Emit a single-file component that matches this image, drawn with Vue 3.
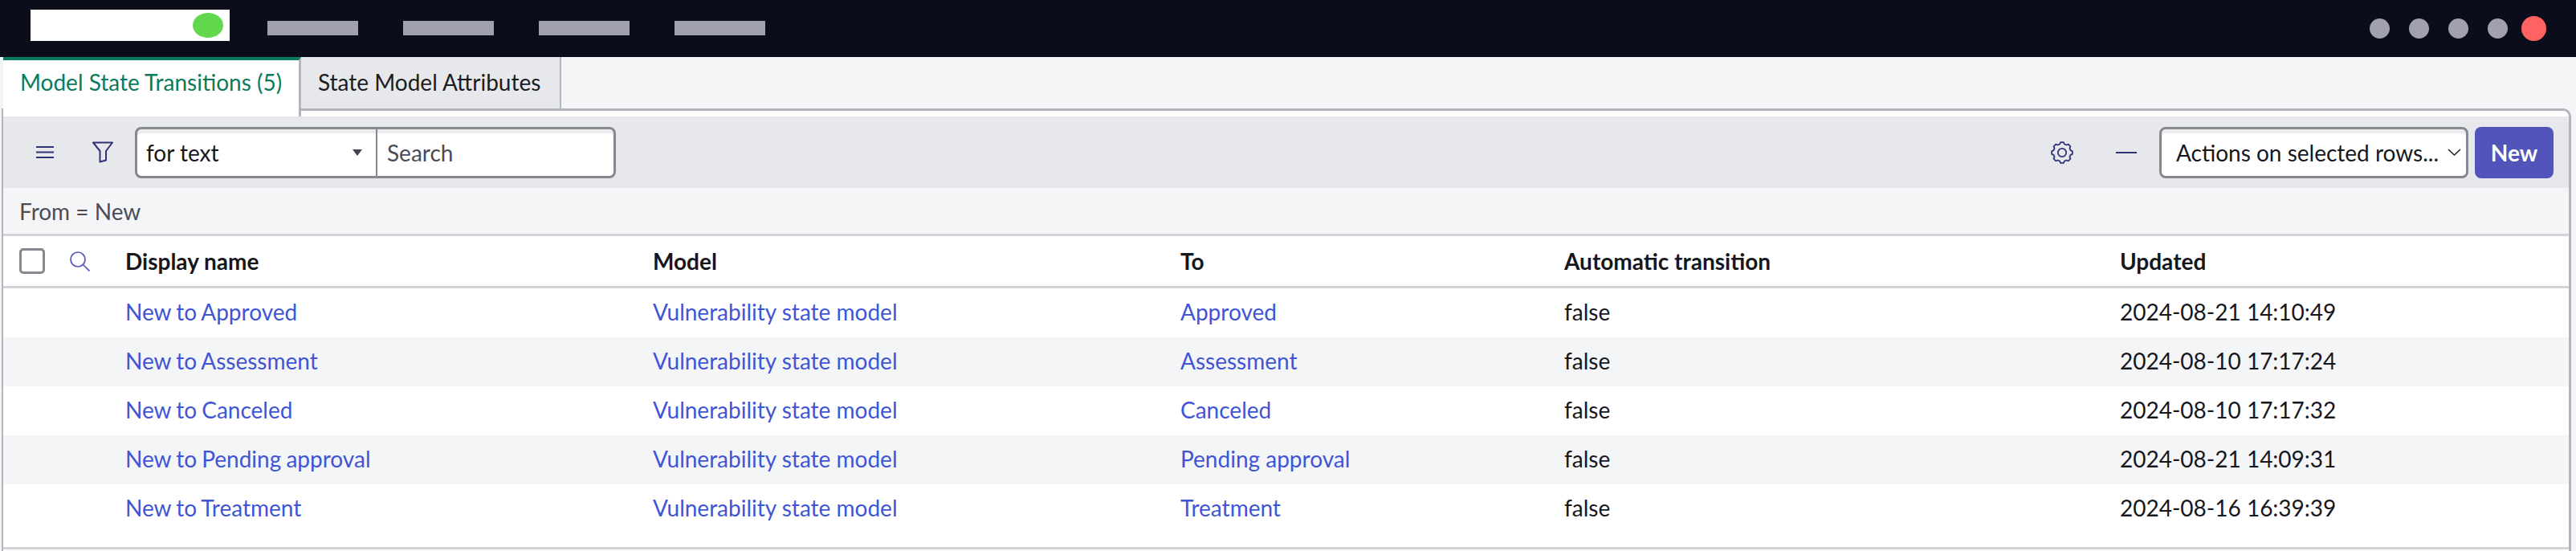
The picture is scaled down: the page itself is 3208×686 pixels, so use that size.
<script setup>
const navItems = [1, 2, 3, 4];
const dots = [1, 2, 3, 4];

const rows = [
  { name: 'New to Approved', model: 'Vulnerability state model', to: 'Approved', auto: 'false', updated: '2024-08-21 14:10:49' },
  { name: 'New to Assessment', model: 'Vulnerability state model', to: 'Assessment', auto: 'false', updated: '2024-08-10 17:17:24' },
  { name: 'New to Canceled', model: 'Vulnerability state model', to: 'Canceled', auto: 'false', updated: '2024-08-10 17:17:32' },
  { name: 'New to Pending approval', model: 'Vulnerability state model', to: 'Pending approval', auto: 'false', updated: '2024-08-21 14:09:31' },
  { name: 'New to Treatment', model: 'Vulnerability state model', to: 'Treatment', auto: 'false', updated: '2024-08-16 16:39:39' }
];

// gear outline with 8 rounded teeth
function gearPath() {
  const pts = [];
  for (let i = 0; i < 8; i++) {
    const a = (i * Math.PI) / 4;
    [[10.9, -0.27], [13, -0.15], [13, 0.15], [10.9, 0.27]].forEach(([r, d]) => {
      pts.push((14 + r * Math.cos(a + d)).toFixed(2) + ' ' + (14 + r * Math.sin(a + d)).toFixed(2));
    });
  }
  return 'M' + pts.join('L') + 'Z';
}
const gear = gearPath();
</script>

<template>
  <div class="page">
    <header class="topbar">
      <div class="logo"><span class="logo-dot"></span></div>
      <nav class="nav">
        <span v-for="n in navItems" :key="n" class="nav-item"></span>
      </nav>
      <div class="dots">
        <span v-for="d in dots" :key="d" class="dot"></span>
        <span class="dot-red"></span>
      </div>
    </header>

    <div class="tabs">
      <div class="tab active">Model State Transitions (5)</div>
      <div class="tab">State Model Attributes</div>
    </div>

    <section class="panel">
      <div class="toolbar">
        <svg class="icon-menu" width="22" height="15" viewBox="0 0 22 15">
          <path d="M0 1h22M0 7.5h22M0 14h22" stroke="#2e3378" stroke-width="2" fill="none" />
        </svg>
        <svg class="icon-filter" width="26" height="27" viewBox="0 0 26 27">
          <path d="M1 1.5h24L17 12v11.5l-7.5 2V12z" stroke="#2e3378" stroke-width="2" fill="none" stroke-linejoin="round" />
        </svg>
        <div class="search-group">
          <div class="field-select">
            <span>for text</span>
            <span class="caret"></span>
          </div>
          <div class="field-search">Search</div>
        </div>
        <div class="spacer"></div>
        <svg class="icon-gear" width="28" height="28" viewBox="0 0 28 28" fill="none" stroke="#2e3378" stroke-width="1.8" stroke-linejoin="round">
          <path :d="gear" />
          <circle cx="14" cy="14" r="5.2" />
        </svg>
        <span class="icon-minus"></span>
        <div class="actions">
          <span>Actions on selected rows...</span>
          <svg width="17" height="9" viewBox="0 0 17 9">
            <path d="M1 1l7.5 7L16 1" stroke="#1c1e26" stroke-width="1.4" fill="none" />
          </svg>
        </div>
        <button class="btn-new">New</button>
      </div>

      <div class="breadcrumb">From = New</div>

      <div class="row head">
        <div class="cell-check"><span class="checkbox"></span></div>
        <div class="cell-search">
          <svg width="25" height="25" viewBox="0 0 25 25" fill="none" stroke="#5054bb" stroke-width="1.7">
            <circle cx="10" cy="10" r="9" />
            <path d="M16.5 16.5l8 8" />
          </svg>
        </div>
        <div class="col c-name">Display name</div>
        <div class="col c-model">Model</div>
        <div class="col c-to">To</div>
        <div class="col c-auto">Automatic transition</div>
        <div class="col c-updated">Updated</div>
      </div>

      <div v-for="r in rows" :key="r.name" class="row body">
        <div class="cell-check"></div>
        <div class="cell-search"></div>
        <div class="col c-name"><a>{{ r.name }}</a></div>
        <div class="col c-model"><a>{{ r.model }}</a></div>
        <div class="col c-to"><a>{{ r.to }}</a></div>
        <div class="col c-auto">{{ r.auto }}</div>
        <div class="col c-updated">{{ r.updated }}</div>
      </div>
      <div class="table-end"></div>
    </section>
  </div>
</template>

<style scoped>
.page {
  width: 3208px;
  height: 686px;
  overflow: hidden;
  background: #f4f5f7;
  font-family: 'Lato', 'Liberation Sans', sans-serif;
  font-size: 28px;
  color: #16171d;
}

.topbar {
  height: 71px;
  background: #0c0d1a;
  display: flex;
  align-items: center;
  padding-left: 38px;
  padding-right: 37px;
}

.logo {
  width: 248px;
  height: 39px;
  margin-top: -8px;
  background: #fff;
  display: flex;
  align-items: center;
  justify-content: flex-end;
  padding-right: 8px;
  box-sizing: border-box;
}

.logo-dot {
  width: 38px;
  height: 31px;
  border-radius: 50%;
  background: #62d84e;
}

.nav {
  display: flex;
  gap: 56px;
  margin-left: 47px;
  margin-top: -1px;
}

.nav-item {
  width: 113px;
  height: 18px;
  background: #a1a1ae;
}

.dots {
  margin-left: auto;
  display: flex;
  align-items: center;
}

.dot {
  width: 25px;
  height: 25px;
  border-radius: 50%;
  background: #a1a1ae;
  margin-right: 24px;
}

.dot-red {
  width: 31px;
  height: 31px;
  border-radius: 50%;
  background: #ff6262;
  margin-left: -7px;
}

.tabs {
  display: flex;
  height: 64px;
  padding-left: 4px;
  position: relative;
  z-index: 1;
}

.tab {
  box-sizing: border-box;
  width: 324px;
  height: 67px;
  background: #e7e8ec;
  border-right: 2px solid #b3b5bc;
  border-bottom: 3px solid #b3b5bc;
  padding-left: 21px;
  padding-bottom: 2px;
  display: flex;
  align-items: center;
  color: #1b1c22;
  white-space: nowrap;
}

.tab.active {
  width: 371px;
  background: #fff;
  color: #0a7b5c;
  border-top: 4px solid #0a7b5c;
  border-right: 3px solid #b3b5bc;
  border-bottom: 0;
  height: 74px;
  padding-bottom: 16px;
}

.panel {
  box-sizing: border-box;
  width: 3200px;
  height: 551px;
  border: 3px solid #b3b5bc;
  border-left-width: 2px;
  border-bottom: 0;
  margin-left: 2px;
  border-radius: 0 10px 0 0;
  background: #fff;
  padding-top: 7px;
}

.toolbar {
  height: 89px;
  background: #e7e8ec;
  display: flex;
  align-items: center;
  padding: 0 19px 0 41px;
  box-sizing: border-box;
}

.icon-filter {
  margin-left: 48px;
}

.search-group {
  margin-left: 27px;
  width: 599px;
  height: 64px;
  box-sizing: border-box;
  border: 3px solid #85888f;
  border-radius: 8px;
  background: #fff;
  display: flex;
  overflow: hidden;
  box-shadow: inset 0 5px 0 #ececef;
}

.field-select {
  width: 299px;
  flex: none;
  box-sizing: border-box;
  border-right: 2px solid #85888f;
  padding: 0 17px 0 11px;
  display: flex;
  align-items: center;
  justify-content: space-between;
  color: #16171d;
}

.caret {
  width: 0;
  height: 0;
  border-left: 6px solid transparent;
  border-right: 6px solid transparent;
  border-top: 8px solid #44464f;
}

.field-search {
  padding-left: 12px;
  display: flex;
  align-items: center;
  color: #4a4c56;
}

.spacer {
  flex: 1;
}

.icon-gear {
  margin-right: 53px;
}

.icon-minus {
  width: 26px;
  height: 2px;
  background: #2e3378;
  margin-right: 28px;
}

.actions {
  width: 385px;
  height: 64px;
  box-sizing: border-box;
  border: 3px solid #85888f;
  border-radius: 8px;
  background: #fff;
  box-shadow: inset 0 5px 0 #ececef;
  display: flex;
  align-items: center;
  justify-content: space-between;
  padding: 0 6px 0 18px;
  white-space: nowrap;
}

.btn-new {
  width: 98px;
  height: 64px;
  margin-left: 8px;
  border: 0;
  border-radius: 8px;
  background: #5054bb;
  color: #fff;
  font-family: inherit;
  font-size: 28px;
  font-weight: 700;
}

.breadcrumb {
  box-sizing: border-box;
  height: 60px;
  background: #f4f5f7;
  border-bottom: 3px solid #d3d4d9;
  padding-left: 20px;
  display: flex;
  align-items: center;
  color: #4a4c56;
}

.row {
  display: flex;
  align-items: center;
  height: 61px;
  box-sizing: border-box;
}

.row.body {
  padding-bottom: 3px;
}

.row.head {
  height: 65px;
  border-bottom: 3px solid #d3d4d9;
  font-weight: 700;
}

.row.body:nth-of-type(even) {
  background: #fff;
}

.row.body:nth-of-type(odd) {
  background: #f4f5f7;
}

.cell-check {
  width: 82px;
  flex: none;
  padding-left: 20px;
  box-sizing: border-box;
}

.checkbox {
  display: block;
  width: 32px;
  height: 32px;
  box-sizing: border-box;
  border: 3px solid #85888f;
  border-radius: 5px;
  background: #fff;
}

.cell-search {
  width: 70px;
  flex: none;
  display: flex;
  padding-left: 1px;
  box-sizing: border-box;
}

.col {
  flex: none;
  white-space: nowrap;
}

.c-name { width: 657px; }
.c-model { width: 657px; }
.c-to { width: 478px; }
.c-auto { width: 692px; }
.c-updated { width: 500px; }

.c-name a {
  word-spacing: -1px;
}

.col a {
  color: #3f55d6;
}

.table-end {
  box-sizing: border-box;
  height: 20px;
  border-bottom: 3px solid #d3d4d9;
}
</style>
